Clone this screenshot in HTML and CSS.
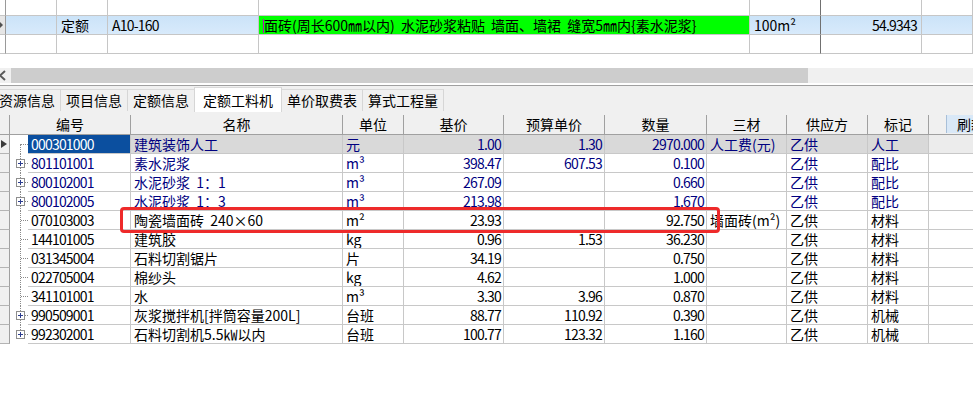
FILE: index.html
```html
<!DOCTYPE html>
<html lang="zh">
<head>
<meta charset="utf-8">
<title>定额工料机</title>
<link rel="stylesheet" href="styles.css">
</head>
<body>
<div class="top">
  <div class="c g"></div><div class="c"></div><div class="c"></div><div class="c"></div><div class="c"></div><div class="c dk"></div><div class="c"></div><div class="c"></div>
  <div class="c g sel"><span class="tri-s"></span></div><div class="c b"></div><div class="c b">定额</div><div class="c b n">A10-160</div><div class="c green"><span class="caret"></span>面砖(周长600㎜以内) 水泥砂浆粘贴 墙面、墙裙 缝宽5㎜内{素水泥浆}</div><div class="c b dk">100m²</div><div class="c b r n">54.9343</div><div class="c b"></div>
  <div class="c g"></div><div class="c"></div><div class="c"></div><div class="c"></div><div class="c"></div><div class="c dk"></div><div class="c"></div><div class="c"></div>
</div>
<div class="gap"></div>
<div class="hscroll">
  <div class="arr"><svg width="11" height="15" viewBox="0 0 11 15"><path d="M5 3 L0 7.5 L5 12" fill="none" stroke="#5a5a5a" stroke-width="2"/></svg></div>
  <div class="thumb"></div>
  <div class="track"></div>
</div>
<div class="tabs">
  <div class="tab first">资源信息</div>
  <div class="tab">项目信息</div>
  <div class="tab">定额信息</div>
  <div class="tab active">定额工料机</div>
  <div class="tab">单价取费表</div>
  <div class="tab">算式工程量</div>
</div>
<div class="grid">
  <div class="hdr">
    <div class="hc gut"></div>
    <div class="hc">编号</div>
    <div class="hc">名称</div>
    <div class="hc">单位</div>
    <div class="hc">基价</div>
    <div class="hc">预算单价</div>
    <div class="hc">数量</div>
    <div class="hc">三材</div>
    <div class="hc">供应方</div>
    <div class="hc">标记</div>
    <div class="hc ext"><span class="btn">刷新</span></div>
  </div>

  <div class="row blue cur">
    <div class="gut"><span class="tri"></span></div>
    <div class="tree first"></div>
    <div class="c code hl n">000301000</div>
    <div class="c">建筑装饰人工</div>
    <div class="c">元</div>
    <div class="c r n">1.00</div>
    <div class="c r n">1.30</div>
    <div class="c r n">2970.000</div>
    <div class="c">人工费(元)</div>
    <div class="c">乙供</div>
    <div class="c">人工</div>
    <div class="c x"></div>
  </div>
  <div class="row blue">
    <div class="gut"></div>
    <div class="tree plus"><svg class="pb" width="9" height="9" viewBox="0 0 9 9"><rect x="0.5" y="0.5" width="8" height="8" fill="#fff" stroke="#8e8e8e"/><path d="M2 4.5H7M4.5 2V7" stroke="#2c3d8f"/></svg></div>
    <div class="c n">801101001</div>
    <div class="c">素水泥浆</div>
    <div class="c">m³</div>
    <div class="c r n">398.47</div>
    <div class="c r n">607.53</div>
    <div class="c r n">0.100</div>
    <div class="c"></div>
    <div class="c">乙供</div>
    <div class="c">配比</div>
    <div class="c x"></div>
  </div>
  <div class="row blue">
    <div class="gut"></div>
    <div class="tree plus"><svg class="pb" width="9" height="9" viewBox="0 0 9 9"><rect x="0.5" y="0.5" width="8" height="8" fill="#fff" stroke="#8e8e8e"/><path d="M2 4.5H7M4.5 2V7" stroke="#2c3d8f"/></svg></div>
    <div class="c n">800102001</div>
    <div class="c">水泥砂浆 1：1</div>
    <div class="c">m³</div>
    <div class="c r n">267.09</div>
    <div class="c r n"></div>
    <div class="c r n">0.660</div>
    <div class="c"></div>
    <div class="c">乙供</div>
    <div class="c">配比</div>
    <div class="c x"></div>
  </div>
  <div class="row blue">
    <div class="gut"></div>
    <div class="tree plus"><svg class="pb" width="9" height="9" viewBox="0 0 9 9"><rect x="0.5" y="0.5" width="8" height="8" fill="#fff" stroke="#8e8e8e"/><path d="M2 4.5H7M4.5 2V7" stroke="#2c3d8f"/></svg></div>
    <div class="c n">800102005</div>
    <div class="c">水泥砂浆 1：3</div>
    <div class="c">m³</div>
    <div class="c r n">213.98</div>
    <div class="c r n"></div>
    <div class="c r n">1.670</div>
    <div class="c"></div>
    <div class="c">乙供</div>
    <div class="c">配比</div>
    <div class="c x"></div>
  </div>
  <div class="row">
    <div class="gut"></div>
    <div class="tree"></div>
    <div class="c n">070103003</div>
    <div class="c">陶瓷墙面砖 240×60</div>
    <div class="c">m²</div>
    <div class="c r n">23.93</div>
    <div class="c r n"></div>
    <div class="c r n">92.750</div>
    <div class="c">墙面砖(m²)</div>
    <div class="c">乙供</div>
    <div class="c">材料</div>
    <div class="c x"></div>
  </div>
  <div class="row">
    <div class="gut"></div>
    <div class="tree"></div>
    <div class="c n">144101005</div>
    <div class="c">建筑胶</div>
    <div class="c">kg</div>
    <div class="c r n">0.96</div>
    <div class="c r n">1.53</div>
    <div class="c r n">36.230</div>
    <div class="c"></div>
    <div class="c">乙供</div>
    <div class="c">材料</div>
    <div class="c x"></div>
  </div>
  <div class="row">
    <div class="gut"></div>
    <div class="tree"></div>
    <div class="c n">031345004</div>
    <div class="c">石料切割锯片</div>
    <div class="c">片</div>
    <div class="c r n">34.19</div>
    <div class="c r n"></div>
    <div class="c r n">0.750</div>
    <div class="c"></div>
    <div class="c">乙供</div>
    <div class="c">材料</div>
    <div class="c x"></div>
  </div>
  <div class="row">
    <div class="gut"></div>
    <div class="tree"></div>
    <div class="c n">022705004</div>
    <div class="c">棉纱头</div>
    <div class="c">kg</div>
    <div class="c r n">4.62</div>
    <div class="c r n"></div>
    <div class="c r n">1.000</div>
    <div class="c"></div>
    <div class="c">乙供</div>
    <div class="c">材料</div>
    <div class="c x"></div>
  </div>
  <div class="row">
    <div class="gut"></div>
    <div class="tree"></div>
    <div class="c n">341101001</div>
    <div class="c">水</div>
    <div class="c">m³</div>
    <div class="c r n">3.30</div>
    <div class="c r n">3.96</div>
    <div class="c r n">0.870</div>
    <div class="c"></div>
    <div class="c">乙供</div>
    <div class="c">材料</div>
    <div class="c x"></div>
  </div>
  <div class="row">
    <div class="gut"></div>
    <div class="tree plus"><svg class="pb" width="9" height="9" viewBox="0 0 9 9"><rect x="0.5" y="0.5" width="8" height="8" fill="#fff" stroke="#8e8e8e"/><path d="M2 4.5H7M4.5 2V7" stroke="#2c3d8f"/></svg></div>
    <div class="c n">990509001</div>
    <div class="c">灰浆搅拌机[拌筒容量200L]</div>
    <div class="c">台班</div>
    <div class="c r n">88.77</div>
    <div class="c r n">110.92</div>
    <div class="c r n">0.390</div>
    <div class="c"></div>
    <div class="c">乙供</div>
    <div class="c">机械</div>
    <div class="c x"></div>
  </div>
  <div class="row">
    <div class="gut"></div>
    <div class="tree plus last"><svg class="pb" width="9" height="9" viewBox="0 0 9 9"><rect x="0.5" y="0.5" width="8" height="8" fill="#fff" stroke="#8e8e8e"/><path d="M2 4.5H7M4.5 2V7" stroke="#2c3d8f"/></svg></div>
    <div class="c n">992302001</div>
    <div class="c">石料切割机5.5㎾以内</div>
    <div class="c">台班</div>
    <div class="c r n">100.77</div>
    <div class="c r n">123.32</div>
    <div class="c r n">1.160</div>
    <div class="c"></div>
    <div class="c">乙供</div>
    <div class="c">机械</div>
    <div class="c x"></div>
  </div>

  <div class="redbox"></div>
</div>
</body>
</html>
```

FILE: styles.css
```css
* { box-sizing: border-box; }
html, body { margin: 0; padding: 0; }
body {
  width: 973px;
  height: 396px;
  overflow: hidden;
  background: #fff;
  font-family: "Noto Sans CJK SC", "Noto Sans", sans-serif;
  font-size: 14px;
  color: #000;
  word-spacing: 3px;
}

.n { letter-spacing: -0.8px; }
.r { text-align: right; }

/* ---------- top grid ---------- */
.top {
  display: grid;
  grid-template-columns: 6px 51px 51px 151px 491px 71px 101px 1fr;
  grid-template-rows: 16px 19px 19px;
}
.top .c {
  border-right: 1px solid #c6c6c6;
  border-bottom: 1px solid #c6c6c6;
  padding: 0 4px;
  line-height: 18px;
  white-space: nowrap;
  overflow: hidden;
}
.top .c.g { border-right-color: #9a9a9a; padding: 0; }
.top .c.g.sel { background: #e6e6e6; }
.top .c.dk { border-right-color: #707070; }
.top .c.b { background: linear-gradient(#cbe3f8, #d8eafb); }
.top .c.r { padding-right: 4px; }
.top .c.green { background: #00ff00; padding-left: 4px; }
.caret {
  display: inline-block;
  width: 1px;
  height: 14px;
  background: #c000c0;
  vertical-align: -2px;
}
.tri-s {
  display: block;
  width: 0;
  height: 0;
  margin-top: 6px;
  border-left: 3px solid #505050;
  border-top: 3px solid transparent;
  border-bottom: 3px solid transparent;
}

.gap { height: 14px; }

/* ---------- scrollbar ---------- */
.hscroll {
  display: flex;
  height: 15px;
  margin-bottom: 2px;
}
.hscroll .arr { width: 11px; background: #f0f0f0; }
.hscroll .arr svg { display: block; }
.hscroll .thumb { width: 797px; background: #cdcdcd; }
.hscroll .track { flex: 1; background: #f0f0f0; }

/* ---------- tabs ---------- */
.tabs {
  display: flex;
  align-items: flex-start;
  height: 30px;
  border-top: 1px solid #a0a0a0;
  background: #f0f0f0;
  padding-top: 3px;
}
.tab {
  height: 22px;
  line-height: 20px;
  padding: 0 5px;
  background: #f0f0f0;
  border-top: 1px solid #dadada;
  border-right: 1px solid #d6d6d6;
  white-space: nowrap;
}
.tab.first { margin-left: -6px; }
.tab.active {
  background: #fff;
  height: 25px;
  margin-top: -2px;
  line-height: 24px;
  padding: 0 8px;
  border-left: 1px solid #d6d6d6;
  margin-left: -1px;
}

/* ---------- data grid ---------- */
.grid { position: relative; }
.hdr {
  display: grid;
  grid-template-columns: 10px 121px 212px 61px 100px 101px 102px 80px 81px 61px 1fr;
  height: 20px;
  border-bottom: 1px solid #a0a0a0;
  background: #f0f0f0;
}
.hc {
  border-right: 1px solid #a0a0a0;
  text-align: center;
  line-height: 19px;
  white-space: nowrap;
}
.hc.ext { border-right: none; overflow: hidden; text-align: left; }
.btn {
  display: block;
  margin-left: 17px;
  margin-top: -1px;
  height: 19px;
  line-height: 18px;
  padding-left: 10px;
  background: #d9e8f7;
  border-left: 1px solid #a8bfd8;
  border-top: 1px solid #e8f1fb;
  white-space: nowrap;
  overflow: hidden;
}

.row {
  display: grid;
  grid-template-columns: 10px 18px 103px 212px 61px 100px 101px 102px 80px 81px 61px 1fr;
  height: 19px;
}
.row .gut {
  background: #f0f0f0;
  border-right: 1px solid #a0a0a0;
  border-bottom: 1px solid #b4b4b4;
}
.row .c {
  border-right: 1px solid #c8c8c8;
  border-bottom: 1px solid #c8c8c8;
  padding: 0 3px;
  line-height: 18px;
  white-space: nowrap;
  overflow: hidden;
}
.row .c.r { padding-right: 2px; }
.row .c.x { border-right: none; }
.row.blue .c { color: #000080; }
.row.cur .c { background: #d9d9d9; }
.row.cur .c.x { background: #ececec; }
.row.cur .c.hl { background: #0b4f9f; color: #fff; }

.tri {
  display: block;
  width: 0;
  height: 0;
  margin: 5px 0 0 1px;
  border-left: 6px solid #3c3c3c;
  border-top: 4px solid transparent;
  border-bottom: 4px solid transparent;
}

/* tree connectors */
.tree { position: relative; }
.tree::before {
  content: "";
  position: absolute;
  left: 10px;
  top: 0;
  bottom: 0;
  border-left: 1px dotted #8a8a8a;
}
.tree.first::before { top: 9px; }
.tree.last::before { bottom: 10px; }
.tree::after {
  content: "";
  position: absolute;
  left: 11px;
  right: 0;
  top: 9px;
  border-top: 1px dotted #8a8a8a;
}
.tree.plus::after { left: 15px; }
.tree .pb {
  position: absolute;
  left: 6px;
  top: 5px;
  display: block;
}

.redbox {
  position: absolute;
  left: 120px;
  top: 92px;
  width: 600px;
  height: 26px;
  border: 3px solid #ee2a2a;
  border-radius: 4px;
  pointer-events: none;
}
```
